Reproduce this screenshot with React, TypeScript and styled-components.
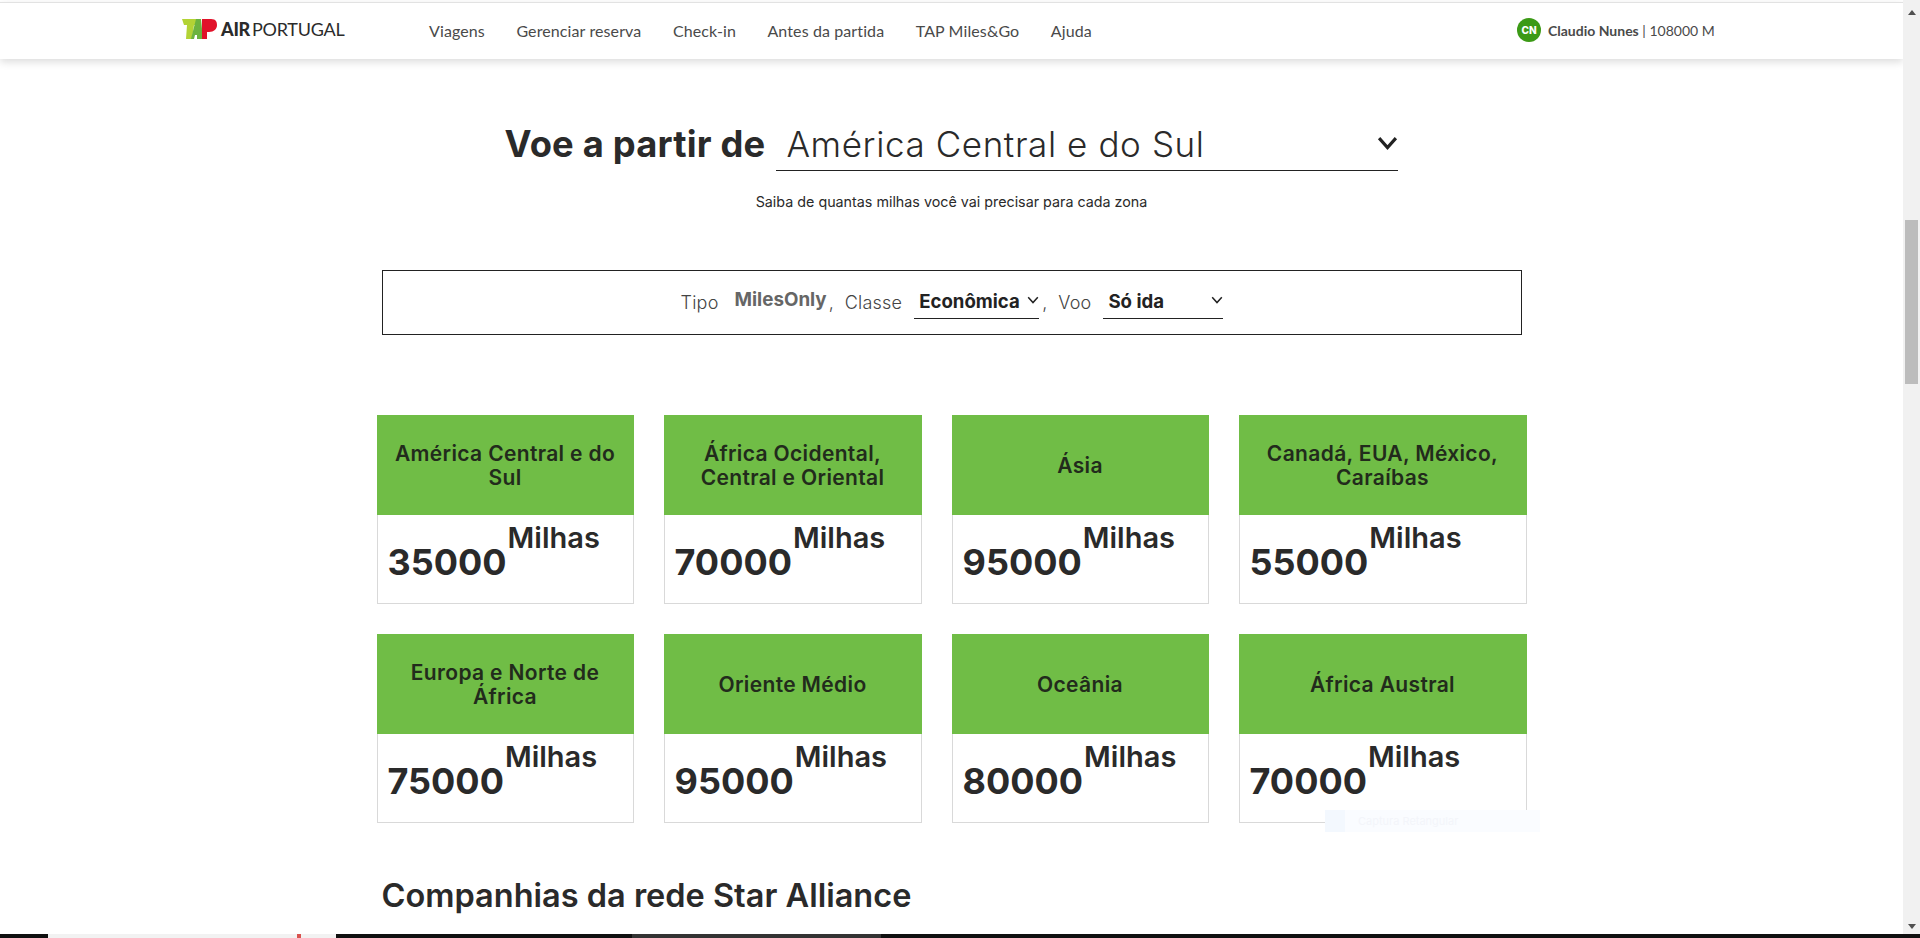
import React from "react";
import styled, { createGlobalStyle } from "styled-components";

const Global = createGlobalStyle`
  html, body { margin: 0; padding: 0; background: #fff; overflow: hidden; }
  * { box-sizing: border-box; }
`;

const Page = styled.div`
  position: relative;
  width: 1920px;
  height: 938px;
  display: grid;
  grid-template-columns: 1903px 17px;
  grid-template-rows: 934px 4px;
  overflow: hidden;
  background: #fff;
`;

const Main = styled.main`
  position: relative;
  overflow: hidden;
  padding-top: 2px;
`;

const Header = styled.header`
  height: 57px;
  border-top: 1px solid #e2e2e2;
  background: #fff;
  box-shadow: 0 3px 8px rgba(0, 0, 0, 0.14);
  display: flex;
  align-items: center;
  padding: 0 0 2px 182px;
  font-family: Lato, sans-serif;
  color: #4a4a4a;
`;

const Logo = styled.div`
  display: flex;
  align-items: center;
  width: 247px;
  color: #2b2b2b;
  font-size: 18px;
  letter-spacing: -0.25px;
  margin-top: -2px;
`;

const LogoMark = styled.svg`
  width: 35px;
  height: 20px;
  margin-right: 4px;
  flex: none;
`;

const LogoAir = styled.b`
  font-weight: 900;
  margin-right: 2px;
`;

const LogoPortugal = styled.span`
  font-weight: 400;
`;

const NavList = styled.nav`
  display: flex;
  gap: 31.5px;
  font-size: 16px;
  letter-spacing: 0.11px;
  width: 1088px;
`;

const User = styled.div`
  display: flex;
  align-items: center;
  font-size: 14px;
  white-space: pre;
`;

const Avatar = styled.span`
  width: 24px;
  height: 24px;
  border-radius: 50%;
  background: #3c9a16;
  color: #fff;
  font: 800 10px Inter, sans-serif;
  display: flex;
  align-items: center;
  justify-content: center;
  margin-right: 7px;
`;

const UserName = styled.b`
  font-weight: 700;
`;

const Content = styled.div`
  width: 1150px;
  margin: 0 auto;
  font-family: Inter, sans-serif;
  color: #2a2a2a;
`;

const TitleRow = styled.div`
  display: flex;
  justify-content: center;
  align-items: center;
  margin-top: 53px;
  height: 59px;
`;

const Title = styled.h1`
  margin: 5px 11px 0 0;
  font-size: 36.3px;
  font-weight: 700;
  letter-spacing: 0.2px;
  white-space: nowrap;
`;

const OriginSelect = styled.div`
  width: 622px;
  height: 59px;
  display: flex;
  align-items: center;
  justify-content: space-between;
  padding: 5px 0 0 10px;
  border-bottom: 1px solid #222;
  font-size: 35px;
  font-weight: 300;
  letter-spacing: 0.6px;
`;

const Sub = styled.p`
  margin: 19px 0 0;
  text-align: center;
  font-size: 14.3px;
  line-height: 24px;
`;

const FilterBox = styled.div`
  margin: 56px 5px 0;
  height: 65px;
  border: 1px solid #222;
  display: flex;
  justify-content: center;
  align-items: center;
  padding-left: 4px;
  font-size: 18px;
  font-weight: 300;
  color: #444;
`;

const Label = styled.span`
  letter-spacing: 0.2px;
`;

const Miles = styled.b`
  font-size: 18.8px;
  font-weight: 700;
  color: #666;
  margin: 0 2px 7px 16px;
`;

const Comma = styled.span`
  margin: 0 11px 0 0;
`;

const FilterSelect = styled.div<{ $w: number }>`
  width: ${(p) => p.$w}px;
  height: 33px;
  margin: 0 3px 1px 12px;
  padding: 0 0 2px 5px;
  border-bottom: 1px solid #222;
  display: flex;
  align-items: center;
  justify-content: space-between;
  font-size: 18.6px;
  font-weight: 700;
  color: #222;
  white-space: nowrap;
`;

const CardGrid = styled.div`
  margin-top: 80px;
  display: grid;
  grid-template-columns: 257px 258px 257px 288px;
  column-gap: 30px;
  row-gap: 30px;
`;

const Card = styled.article`
  height: 189px;
  border: 1px solid #d9d9d9;
  border-top: 0;
`;

const CardHead = styled.h3`
  margin: 0 -1px;
  height: 100px;
  background: #70bd46;
  display: flex;
  align-items: center;
  justify-content: center;
  text-align: center;
  padding: 1px 15px 0;
  font-size: 21px;
  line-height: 24px;
  letter-spacing: 0.35px;
  font-weight: 600;
  color: #222b1c;
`;

const CardBody = styled.div`
  display: flex;
  align-items: flex-start;
  padding: 6px 0 0 10px;
`;

const Amount = styled.span`
  font-size: 36px;
  line-height: 46px;
  margin-top: 18px;
  font-weight: 700;
`;

const Unit = styled.span`
  font-size: 29px;
  line-height: 34px;
  font-weight: 600;
  margin-left: 1px;
`;

const Section = styled.h2`
  margin: 54px 0 0 5px;
  font-size: 32.5px;
  line-height: 38px;
  font-weight: 600;
`;

const Ghost = styled.div`
  position: absolute;
  left: 1325px;
  top: 810px;
  width: 215px;
  height: 22px;
  background: #fafcff;
  display: flex;
  align-items: center;
  font: 11px Inter, sans-serif;
  color: #f3f5fa;
  gap: 13px;
`;

const GhostIcon = styled.span`
  width: 20px;
  height: 22px;
  background: #f3f8fe;
`;

const ScrollTrack = styled.aside`
  background: #f1f1f1;
  position: relative;
  display: flex;
  flex-direction: column;
  align-items: center;
  justify-content: space-between;
  padding: 10px 0 5px;
`;

const Arrow = styled.span<{ $down?: boolean }>`
  width: 0;
  height: 0;
  border-left: 4px solid transparent;
  border-right: 4px solid transparent;
  ${(p) => (p.$down ? "border-top: 5px solid #505050;" : "border-bottom: 5px solid #505050;")}
`;

const Thumb = styled.div`
  position: absolute;
  left: 2px;
  top: 220px;
  width: 13px;
  height: 164px;
  background: #bcbcbc;
`;

const Taskbar = styled.div`
  grid-column: 1 / -1;
  background: #101010;
  position: relative;
  display: flex;
`;

const TaskSlot = styled.span<{ $w: number; $ml: number; $c: string }>`
  width: ${(p) => p.$w}px;
  margin-left: ${(p) => p.$ml}px;
  background: ${(p) => p.$c};
  padding-left: 249px;
`;

const TaskMark = styled.i`
  display: block;
  width: 4px;
  height: 4px;
  background: #d9534f;
`;

const Chevron = ({ size, weight }: { size: number; weight: number }) => (
  <svg width={size} height={size * 0.7} viewBox="0 0 20 14" fill="none" style={{ flex: "none" }}>
    <polyline points="2,2 10,11 18,2" stroke="#222" strokeWidth={weight} />
  </svg>
);

const nav = ["Viagens", "Gerenciar reserva", "Check-in", "Antes da partida", "TAP Miles&Go", "Ajuda"];

const zones: [string, string][] = [
  ["América Central e do Sul", "35000"],
  ["África Ocidental, Central e Oriental", "70000"],
  ["Ásia", "95000"],
  ["Canadá, EUA, México, Caraíbas", "55000"],
  ["Europa e Norte de África", "75000"],
  ["Oriente Médio", "95000"],
  ["Oceânia", "80000"],
  ["África Austral", "70000"],
];

export default function App() {
  return (
    <Page>
      <Global />
      <Main>
        <Header>
          <Logo>
            <LogoMark viewBox="0 0 35 20">
              <path d="M0 0H16V6H12L10 20H4L5 6H2Z" fill="#b3d335" />
              <path d="M9 20L14 0H19L21 20H15V16H13L12 20Z" fill="#6cb33f" />
              <path d="M20 0H29C34 0 35 3 35 6C35 10 32 13 27 13H25V20H20Z" fill="#e1122a" />
            </LogoMark>
            <LogoAir>AIR</LogoAir>
            <LogoPortugal>PORTUGAL</LogoPortugal>
          </Logo>
          <NavList>
            {nav.map((n) => (
              <span key={n}>{n}</span>
            ))}
          </NavList>
          <User>
            <Avatar>CN</Avatar>
            <UserName>Claudio Nunes</UserName> | 108000 M
          </User>
        </Header>
        <Content>
          <TitleRow>
            <Title>Voe a partir de</Title>
            <OriginSelect>
              América Central e do Sul
              <Chevron size={21} weight={3} />
            </OriginSelect>
          </TitleRow>
          <Sub>Saiba de quantas milhas você vai precisar para cada zona</Sub>
          <FilterBox>
            <Label>Tipo</Label>
            <Miles>MilesOnly</Miles>
            <Comma>,</Comma>
            <Label>Classe</Label>
            <FilterSelect $w={125}>
              Econômica
              <Chevron size={12} weight={2.5} />
            </FilterSelect>
            <Comma>,</Comma>
            <Label>Voo</Label>
            <FilterSelect $w={120}>
              Só ida
              <Chevron size={12} weight={2.5} />
            </FilterSelect>
          </FilterBox>
          <CardGrid>
            {zones.map(([name, amount]) => (
              <Card key={name}>
                <CardHead>{name}</CardHead>
                <CardBody>
                  <Amount>{amount}</Amount>
                  <Unit>Milhas</Unit>
                </CardBody>
              </Card>
            ))}
          </CardGrid>
          <Section>Companhias da rede Star Alliance</Section>
        </Content>
        <Ghost>
          <GhostIcon />
          Captura Retangular
        </Ghost>
      </Main>
      <ScrollTrack>
        <Arrow />
        <Thumb />
        <Arrow $down />
      </ScrollTrack>
      <Taskbar>
        <TaskSlot $w={288} $ml={48} $c="#f2f2f2">
          <TaskMark />
        </TaskSlot>
        <TaskSlot $w={48} $ml={296} $c="#333" />
      </Taskbar>
    </Page>
  );
}
